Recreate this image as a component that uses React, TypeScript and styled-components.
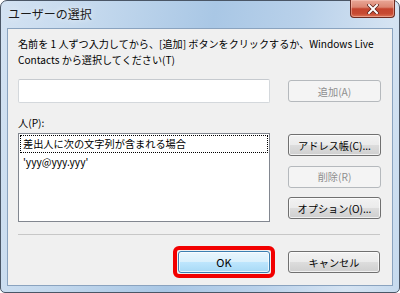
import React from "react";
import styled, { createGlobalStyle } from "styled-components";

const Global = createGlobalStyle`
  html, body { margin: 0; padding: 0; background: #ffffff; }
  * { box-sizing: border-box; }
`;

const FONT = `"Noto Sans CJK JP", "Noto Sans", sans-serif`;

const Window = styled.div`
  width: 400px;
  height: 293px;
  display: flex;
  flex-direction: column;
  padding: 0 6px 6px 6px;
  border: 1px solid #4a5666;
  border-radius: 7px 7px 5px 5px;
  background: linear-gradient(
    100deg,
    #d3e2f2 0%,
    #c3d8ed 22%,
    #a9c7e5 48%,
    #b9d1ea 68%,
    #d5e3f2 88%,
    #c6daee 100%
  );
  font-family: ${FONT};
  color: #000;
`;

const TitleBar = styled.div`
  height: 27px;
  display: flex;
  align-items: flex-start;
  justify-content: space-between;
`;

const Title = styled.div`
  padding: 5px 0 0 1px;
  font-size: 12px;
  line-height: 16px;
  color: #1a1a1a;
  text-shadow: 0 0 6px rgba(255, 255, 255, 0.9);
`;

const CloseButton = styled.div`
  width: 45px;
  height: 18px;
  margin-top: -1px;
  margin-right: -2px;
  border: 1px solid #6e2a20;
  border-top: none;
  border-radius: 0 0 4px 4px;
  background: linear-gradient(
    to bottom,
    #e9a797 0%,
    #dc8672 42%,
    #c5442e 52%,
    #c74a32 80%,
    #dc7356 100%
  );
  box-shadow: inset 0 0 0 1px rgba(255, 210, 200, 0.45);
  display: flex;
  align-items: center;
  justify-content: center;
`;

const Client = styled.div`
  flex: 1;
  display: flex;
  flex-direction: column;
  border: 1px solid #8aa3bf;
  background: #f0f0f0;
  padding: 7px 11px 0 10px;
`;

const Description = styled.div`
  font-size: 10.1px;
  line-height: 16px;
  white-space: nowrap;
`;

const InputRow = styled.div`
  margin-top: 11px;
  display: flex;
  align-items: center;
  gap: 18px;
`;

const TextInput = styled.div`
  flex: 1;
  height: 24px;
  background: #fff;
  border: 1px solid #d4d8dc;
  border-top-color: #c6cacf;
  border-radius: 2px;
`;

const Button = styled.div<{ $disabled?: boolean; $default?: boolean; $w?: number }>`
  width: ${(p) => p.$w ?? 93}px;
  height: 22px;
  flex: none;
  display: flex;
  align-items: center;
  justify-content: center;
  font-size: ${(p) => (p.$default ? "11px" : "10.2px")};
  border-radius: 3px;
  border: 1px solid ${(p) => (p.$disabled ? "#b5b9bd" : p.$default ? "#3c7fb1" : "#707070")};
  color: ${(p) => (p.$disabled ? "#8f8f8f" : "#000")};
  background: ${(p) =>
    p.$disabled
      ? "#f4f4f4"
      : p.$default
      ? "linear-gradient(to bottom, #eaf6fd 0%, #d9f0fc 49%, #bee6fd 50%, #a7d9f5 100%)"
      : "linear-gradient(to bottom, #f2f2f2 0%, #ebebeb 49%, #dddddd 50%, #cfcfcf 100%)"};
  box-shadow: ${(p) => (p.$disabled ? "none" : "inset 0 0 0 1px rgba(255,255,255,0.7)")};
`;

const Label = styled.div`
  margin-top: 12px;
  font-size: 10.2px;
  line-height: 15px;
`;

const ListRow = styled.div`
  margin-top: 3px;
  display: flex;
  gap: 18px;
`;

const ListBox = styled.div`
  flex: 1;
  height: 89px;
  background: #fff;
  border: 1px solid #828790;
  padding: 1px 1px;
  display: flex;
  flex-direction: column;
`;

const ListItem = styled.div<{ $focused?: boolean }>`
  height: 18px;
  padding: 0 2px;
  font-size: 10.2px;
  line-height: 16px;
  border: 1px dotted ${(p) => (p.$focused ? "#000" : "transparent")};
  white-space: nowrap;
`;

const SideButtons = styled.div`
  display: flex;
  flex-direction: column;
  padding-top: 1px;
  gap: 9.5px;
`;

const Separator = styled.div`
  margin-top: 12px;
  height: 1px;
  background: #c7c7c7;
  margin-right: 1px;
`;

const Footer = styled.div`
  margin-top: 16px;
  display: flex;
  justify-content: flex-end;
  gap: 18px;
  padding-right: 1px;
`;

const Highlight = styled.div`
  outline: 4px solid #f20000;
  outline-offset: 1px;
  border-radius: 1px;
`;

export default function App() {
  return (
    <>
      <Global />
      <Window>
        <TitleBar>
          <Title>ユーザーの選択</Title>
          <CloseButton>
            <svg width="12" height="10" viewBox="0 0 12 10">
              <path d="M2 1 L10 9 M10 1 L2 9" stroke="#5a1f18" strokeWidth="3.4" strokeLinecap="square" />
              <path d="M2 1 L10 9 M10 1 L2 9" stroke="#ffffff" strokeWidth="2" strokeLinecap="square" />
            </svg>
          </CloseButton>
        </TitleBar>
        <Client>
          <Description>
            名前を 1 人ずつ入力してから、[追加] ボタンをクリックするか、Windows Live
            <br />
            Contacts から選択してください(T)
          </Description>
          <InputRow>
            <TextInput />
            <Button $disabled>追加(A)</Button>
          </InputRow>
          <Label>人(P):</Label>
          <ListRow>
            <ListBox>
              <ListItem $focused>差出人に次の文字列が含まれる場合</ListItem>
              <ListItem>'yyy@yyy.yyy'</ListItem>
            </ListBox>
            <SideButtons>
              <Button>アドレス帳(C)...</Button>
              <Button $disabled>削除(R)</Button>
              <Button>オプション(O)...</Button>
            </SideButtons>
          </ListRow>
          <Separator />
          <Footer>
            <Highlight>
              <Button $default $w={92}>OK</Button>
            </Highlight>
            <Button $w={92}>キャンセル</Button>
          </Footer>
        </Client>
      </Window>
    </>
  );
}
